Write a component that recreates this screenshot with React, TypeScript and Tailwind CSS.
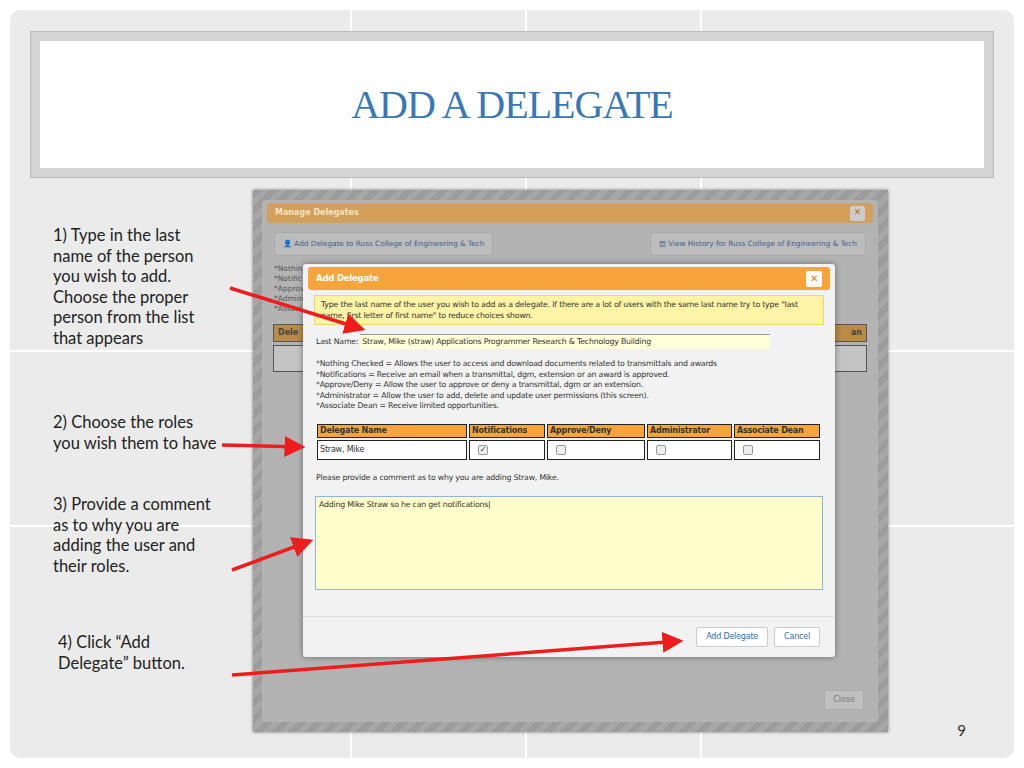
import React from "react";

const hatch =
  "bg-[repeating-linear-gradient(135deg,#9c9c9c_0px,#9c9c9c_6px,#a7a7a7_6px,#a7a7a7_12px)]";

const Arrows: React.FC = () => (
  <svg className="absolute inset-0 pointer-events-none" width={1024} height={768}>
    <defs>
      <marker id="ah" markerWidth="6" markerHeight="6" refX="5" refY="3" orient="auto">
        <path d="M0,0 L6,3 L0,6 Z" fill="#ee1c1c" />
      </marker>
    </defs>
    {[
      [230, 288, 362, 329],
      [222, 445, 302, 447],
      [232, 570, 310, 541],
      [232, 675, 680, 641],
    ].map(([x1, y1, x2, y2], i) => (
      <line key={i} x1={x1} y1={y1} x2={x2} y2={y2} stroke="#ee1c1c" strokeWidth={3.5} markerEnd="url(#ah)" />
    ))}
  </svg>
);

const Box: React.FC<{ checked?: boolean }> = ({ checked }) => (
  <span className="inline-flex w-[10px] h-[10px] border border-[#999] rounded-[2px] bg-[#eee] items-center justify-center text-[8px] leading-none text-[#333]">
    {checked ? "✓" : ""}
  </span>
);

const InnerDialog: React.FC = () => (
  <div className="absolute left-[50px] top-[74px] w-[532px] h-[393px] bg-[#f2f2f2] rounded-[3px] shadow-[0_0_6px_rgba(0,0,0,0.4)] flex flex-col text-[#333] font-[DejaVu_Sans,sans-serif] tracking-[-0.2px]">
    <div className="h-[23px] mx-[5px] mt-[3px] bg-[#f7a53a] rounded-[3px] flex items-center justify-between px-[8px]">
      <span className="text-white text-[8.5px] font-bold">Add Delegate</span>
      <span className="w-[16px] h-[16px] bg-white rounded-[2px] flex items-center justify-center text-[#e67e00] text-[10px] font-bold">✕</span>
    </div>
    <div className="mx-[11px] mt-[5px] bg-[#fdf4a6] border border-[#f0d860] px-[6px] py-[3px] text-[7.8px] leading-[11px]">
      Type the last name of the user you wish to add as a delegate. If there are a lot of users with the same last name try to type "last name, first letter of first name" to reduce choices shown.
    </div>
    <div className="mx-[13px] mt-[9px] flex items-center text-[7.8px]">
      <span className="mr-[2px]">Last Name:</span>
      <span className="w-[410px] h-[15px] bg-[#ffffd8] border-t border-[#999] px-[2px] leading-[14px]">Straw, Mike (straw) Applications Programmer Research &amp; Technology Building</span>
    </div>
    <div className="mx-[13px] mt-[10px] text-[7.8px] leading-[10.5px]">
      <div>*Nothing Checked = Allows the user to access and download documents related to transmittals and awards</div>
      <div>*Notifications = Receive an email when a transmittal, dgm, extension or an award is approved.</div>
      <div>*Approve/Deny = Allow the user to approve or deny a transmittal, dgm or an extension.</div>
      <div>*Administrator = Allow the user to add, delete and update user permissions (this screen).</div>
      <div>*Associate Dean = Receive limited opportunities.</div>
    </div>
    <div className="mx-[14px] mt-[12px] grid grid-cols-[150px_76px_98px_85px_86px] gap-x-[2px] gap-y-[2px] text-[8px]">
      {["Delegate Name", "Notifications", "Approve/Deny", "Administrator", "Associate Dean"].map((h) => (
        <div key={h} className="bg-[#f7a53a] border border-[#222] h-[14px] px-[2px] font-bold leading-[12px]">{h}</div>
      ))}
      <div className="bg-white border border-[#222] h-[20px] px-[2px] flex items-center">Straw, Mike</div>
      <div className="bg-white border border-[#222] h-[20px] px-[8px] flex items-center"><Box checked /></div>
      <div className="bg-white border border-[#222] h-[20px] px-[8px] flex items-center"><Box /></div>
      <div className="bg-white border border-[#222] h-[20px] px-[8px] flex items-center"><Box /></div>
      <div className="bg-white border border-[#222] h-[20px] px-[8px] flex items-center"><Box /></div>
    </div>
    <div className="mx-[13px] mt-[12px] text-[7.8px]">Please provide a comment as to why you are adding Straw, Mike.</div>
    <div className="mx-[12px] mt-[13px] h-[94px] bg-[#ffffcc] border border-[#8fb4e0] px-[3px] py-[2px] text-[7.8px]">
      Adding Mike Straw so he can get notifications|
    </div>
    <div className="mt-auto border-t border-[#ddd] h-[41px] flex items-center justify-end gap-[6px] pr-[15px]">
      <span className="bg-white border border-[#ccc] rounded-[2px] px-[9px] py-[3px] text-[8px] text-[#2a6fb0]">Add Delegate</span>
      <span className="bg-white border border-[#ccc] rounded-[2px] px-[9px] py-[3px] text-[8px] text-[#2a6fb0]">Cancel</span>
    </div>
  </div>
);

const Screenshot: React.FC = () => (
  <div className={`relative w-[635px] h-[542px] ${hatch} shadow-[0_0_3px_rgba(0,0,0,0.5)]`}>
    <div className="absolute left-[9px] top-[10px] w-[616px] h-[522px] bg-[#b3b3b3] rounded-[3px] flex flex-col font-[DejaVu_Sans,sans-serif] text-[#444]">
      <div className="h-[20px] mx-[5px] mt-[3px] bg-[#d2a05a] rounded-[3px] flex items-center justify-between px-[8px]">
        <span className="text-[#f4e4c8] text-[8px] font-bold">Manage Delegates</span>
        <span className="w-[15px] h-[15px] bg-[#ccc] rounded-[2px] flex items-center justify-center text-[#b46a1a] text-[9px] font-bold">✕</span>
      </div>
      <div className="flex justify-between px-[12px] mt-[9px]">
        <span className="h-[24px] border border-[#a8a8a8] bg-[#bcbcbc] rounded-[2px] px-[8px] flex items-center text-[7.3px] text-[#3d5f8a]">👤 Add Delegate to Russ College of Engineering &amp; Tech</span>
        <span className="h-[24px] border border-[#a8a8a8] bg-[#bcbcbc] rounded-[2px] px-[8px] flex items-center text-[7.3px] text-[#3d5f8a]">▤ View History for Russ College of Engineering &amp; Tech</span>
      </div>
      <div className="px-[12px] mt-[8px] text-[7.5px] leading-[10px] text-[#555]">
        <div>*Nothin</div><div>*Notific</div><div>*Approv</div><div>*Admini</div><div>*Associa</div>
      </div>
      <div className="mx-[11px] mt-[10px] h-[18px] bg-[#b98a48] border border-[#555] px-[4px] text-[8px] font-bold leading-[16px] flex justify-between">
        <span>Dele</span><span>an</span>
      </div>
      <div className="mx-[11px] mt-[3px] h-[27px] bg-[#c4c4c4] border border-[#555]" />
      <div className="mt-auto mb-[12px] mr-[14px] self-end bg-[#c0c0c0] border border-[#aaa] rounded-[2px] px-[8px] py-[3px] text-[8px] text-[#777]">Close</div>
    </div>
    <InnerDialog />
  </div>
);

export default function App() {
  return (
    <div className="relative w-[1024px] h-[768px] bg-white p-[10px] font-[Lato,sans-serif]">
      <div className="relative w-full h-full rounded-[10px] bg-[#ebebeb] overflow-hidden">
        <div className="absolute inset-0 pointer-events-none">
          {[340, 515, 690].map((x) => <div key={x} className="absolute top-0 bottom-0 w-[2px] bg-white" style={{ left: x }} />)}
          {[340, 515].map((y) => <div key={y} className="absolute left-0 right-0 h-[2px] bg-white" style={{ top: y }} />)}
        </div>
        <div className="relative flex flex-col pt-[21px] px-[20px]">
          <div className="h-[147px] bg-[#d4d4d4] border border-[#bbb] p-[9px]">
            <div className="h-full bg-white flex items-center justify-center">
              <h1 className="text-[#3a78b5] text-[40px] font-[Liberation_Serif,serif] tracking-tight">ADD A DELEGATE</h1>
            </div>
          </div>
          <div className="flex mt-[12px]">
            <div className="w-[223px] pl-[23px] pr-[30px] text-[16.5px] leading-[20.5px] text-[#222] flex flex-col">
              <p className="mt-[35px]">1) Type in the last name of the person you wish to add. Choose the proper person from the list that appears</p>
              <p className="mt-[64px]">2) Choose the roles you wish them to have</p>
              <p className="mt-[41px]">3) Provide a comment as to why you are adding the user and their roles.</p>
              <p className="mt-[56px] pl-[5px]">4) Click “Add Delegate” button.</p>
            </div>
            <Screenshot />
          </div>
        </div>
        <div className="absolute right-[48px] bottom-[17px] text-[15px] text-[#333]">9</div>
      </div>
      <Arrows />
    </div>
  );
}
